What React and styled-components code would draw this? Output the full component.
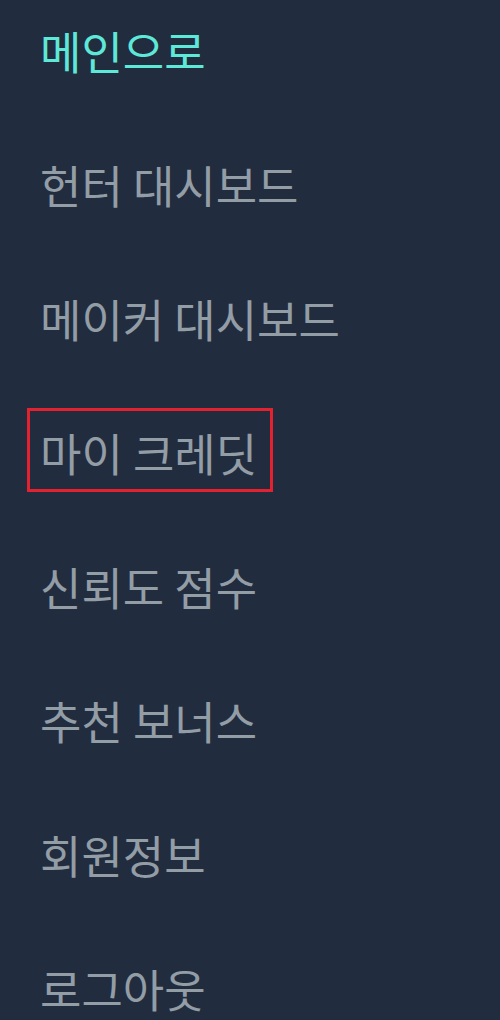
import React from 'react';
import styled, { createGlobalStyle } from 'styled-components';

const GlobalStyle = createGlobalStyle`
  html, body {
    margin: 0;
    padding: 0;
    background: #222c3f;
  }
  body {
    font-family: "Noto Sans CJK KR", "Noto Sans", sans-serif;
  }
`;

const Sidebar = styled.nav`
  width: 500px;
  height: 1020px;
  background: #222c3f;
  box-sizing: border-box;
  padding: 6px 0 0 27px;
  display: flex;
  flex-direction: column;
  align-items: flex-start;
  gap: 50px;
  overflow: hidden;
`;

const MenuLink = styled.a`
  display: block;
  box-sizing: border-box;
  padding: 14px 13px 8px 10px;
  border: 3px solid ${({ $outlined }) => ($outlined ? '#e3212f' : 'transparent')};
  font-size: 45px;
  line-height: 56px;
  font-weight: 400;
  color: ${({ $active }) => ($active ? '#5ee8d8' : '#929da5')};
  text-decoration: none;
  white-space: nowrap;
  cursor: pointer;
`;

const items = [
  { label: '메인으로', active: true },
  { label: '헌터 대시보드' },
  { label: '메이커 대시보드' },
  { label: '마이 크레딧', outlined: true },
  { label: '신뢰도 점수' },
  { label: '추천 보너스' },
  { label: '회원정보' },
  { label: '로그아웃' },
];

export default function App() {
  return (
    <>
      <GlobalStyle />
      <Sidebar>
        {items.map((item) => (
          <MenuLink key={item.label} $active={item.active} $outlined={item.outlined}>
            {item.label}
          </MenuLink>
        ))}
      </Sidebar>
    </>
  );
}
